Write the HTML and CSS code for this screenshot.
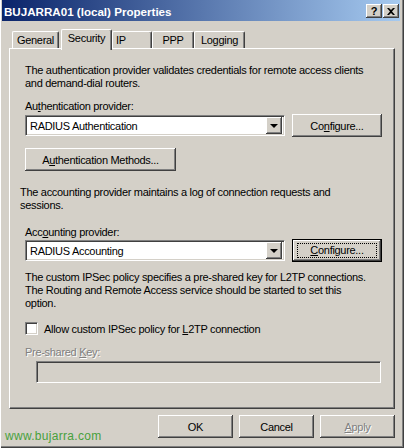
FILE: index.html
```html
<!DOCTYPE html>
<html lang="en">

<head>
    <meta charset="UTF-8">
    <title>BUJARRA01 (local) Properties</title>
    <link rel="stylesheet" href="styles.css">
</head>

<body>
    <div class="window">
        <div class="titlebar">
            <span class="title">BUJARRA01 (local) Properties</span>
            <div class="capBtns">
                <span class="capBtn help">?</span>
                <span class="capBtn">
                    <svg width="8" height="7" viewBox="0 0 8 7">
                        <path d="M0 0h2l2 2 2-2h2L5 3.5 8 7H6L4 5 2 7H0l3-3.5z" fill="#000" />
                    </svg>
                </span>
            </div>
        </div>

        <div class="dialog">
            <div class="tabs">
                <div class="tab tGeneral">General</div>
                <div class="tab active tSecurity">Security</div>
                <div class="tab tIp">IP</div>
                <div class="tab tPpp">PPP</div>
                <div class="tab tLog">Logging</div>
            </div>

            <div class="panel">
                <p class="desc first">The authentication provider validates credentials for remote access clients<br>and demand-dial routers.</p>

                <div class="lbl auth">Au<u>t</u>hentication provider:</div>
                <div class="row">
                    <div class="combo">
                        <span>RADIUS Authentication</span>
                        <span class="arrow"></span>
                    </div>
                    <button class="btn conf">Co<u>n</u>figure...</button>
                </div>

                <button class="btn methods">A<u>u</u>thentication Methods...</button>

                <p class="desc acct">The accounting provider maintains a log of connection requests and<br>sessions.</p>

                <div class="lbl acctLbl">Acc<u>o</u>unting provider:</div>
                <div class="row rowTight">
                    <div class="combo">
                        <span>RADIUS Accounting</span>
                        <span class="arrow"></span>
                    </div>
                    <button class="btn conf focused"><span class="focus"><u>C</u>onfigure...</span></button>
                </div>

                <p class="desc ipsec">The custom IPSec policy specifies a pre-shared key for L2TP connections.<br>The Routing and Remote Access service should be started to set this<br>option.</p>

                <label class="check">
                    <span class="box"></span>
                    <span>Allow custom IPSec policy for <u>L</u>2TP connection</span>
                </label>

                <div class="lbl disabled keyLbl">Pre-shared <u>K</u>ey:</div>
                <div class="keyField"></div>
            </div>

            <div class="footer">
                <button class="btn dlg">OK</button>
                <button class="btn dlg">Cancel</button>
                <button class="btn dlg disabled"><u>A</u>pply</button>
            </div>
        </div>

        <span class="watermark">www.bujarra.com</span>
    </div>
</body>

</html>
```

FILE: styles.css
```css
* {
    box-sizing: border-box;
}

body {
    margin: 0;
    background: #D4D0C8;
    font-family: "Liberation Sans", Arial, sans-serif;
    font-size: 11px;
    letter-spacing: -0.3px;
    color: #000;
}

.window {
    position: relative;
    width: 404px;
    height: 448px;
    padding: 0 4px 4px 2px;
    background: #D4D0C8;
    box-shadow: inset 1px 0 #fff, inset -1px -1px #404040, inset -2px -2px #808080;
}

.titlebar {
    height: 21px;
    display: flex;
    align-items: center;
    justify-content: space-between;
    padding: 0 1px 0 2px;
    background: linear-gradient(to right, #0A246A, #A6CAF0);
}

.title {
    color: #fff;
    font-weight: bold;
    font-size: 11.6px;
    letter-spacing: 0;
    padding-top: 2px;
}

.capBtns {
    display: flex;
    gap: 1px;
    padding-top: 1px;
}

.capBtn {
    width: 16px;
    height: 14px;
    display: flex;
    align-items: center;
    justify-content: center;
    background: #D4D0C8;
    box-shadow: inset -1px -1px #404040, inset 1px 1px #fff, inset -2px -2px #808080;
    font-weight: bold;
    font-size: 11px;
    line-height: 14px;
}

.dialog {
    padding: 8px 5px 0 7px;
}

/* tabs */
.tabs {
    display: flex;
    align-items: flex-end;
    height: 19px;
    padding-left: 3px;
    position: relative;
    z-index: 1;
}

.tab {
    height: 17px;
    line-height: 16px;
    text-align: center;
    background: #D4D0C8;
    border-top: 1px solid #fff;
    border-left: 1px solid #fff;
    border-right: 1px solid #404040;
    box-shadow: inset -1px 0 #808080;
    border-radius: 2px 2px 0 0;
}

.tab.active {
    height: 21px;
    line-height: 17px;
    margin-bottom: -2px;
    padding-bottom: 2px;
}

.tGeneral {
    width: 47px;
}

.tSecurity {
    width: 51px;
    margin-left: 2px;
}

.tIp {
    width: 40px;
    text-align: left;
    padding-left: 3px;
}

.tPpp {
    width: 42px;
}

.tLog {
    width: 51px;
}

/* tab page */
.panel {
    height: 361px;
    padding: 15px 10px 0 15px;
    border-top: 1px solid #fff;
    border-left: 1px solid #fff;
    border-right: 1px solid #404040;
    border-bottom: 1px solid #404040;
    box-shadow: inset -1px -1px #808080;
}

.desc {
    margin: 0;
    line-height: 13px;
    white-space: nowrap;
}

.lbl {
    line-height: 13px;
}

.auth {
    margin-top: 10px;
}

.row {
    display: flex;
    align-items: center;
    gap: 7px;
    margin-top: 1px;
}

.rowTight {
    margin-top: 0;
}

.combo {
    width: 260px;
    height: 21px;
    display: flex;
    align-items: center;
    justify-content: space-between;
    padding: 0 2px 0 4px;
    background: #fff;
    border-top: 1px solid #808080;
    border-left: 1px solid #808080;
    border-right: 1px solid #fff;
    border-bottom: 1px solid #fff;
    box-shadow: inset 1px 1px #404040, inset -1px -1px #D4D0C8;
}

.arrow {
    width: 16px;
    height: 17px;
    position: relative;
    background: #D4D0C8;
    box-shadow: inset -1px -1px #404040, inset 1px 1px #fff, inset -2px -2px #808080;
}

.arrow::after {
    content: "";
    position: absolute;
    left: 4px;
    top: 7px;
    border-left: 4px solid transparent;
    border-right: 4px solid transparent;
    border-top: 4px solid #000;
}

.btn {
    height: 23px;
    padding: 0;
    font-family: inherit;
    font-size: 11px;
    letter-spacing: inherit;
    color: #000;
    background: #D4D0C8;
    border: none;
    box-shadow: inset -1px -1px #404040, inset 1px 1px #fff, inset -2px -2px #808080;
}

.conf {
    width: 90px;
}

.conf.focused {
    box-shadow: inset 0 0 0 1px #000, inset -2px -2px #404040, inset 2px 2px #fff, inset -3px -3px #808080;
    display: flex;
    align-items: center;
    justify-content: center;
}

.focus {
    display: block;
    width: 80px;
    height: 15px;
    line-height: 13px;
    border: 1px dotted #000;
}

.methods {
    display: block;
    width: 151px;
    margin-top: 11px;
}

.acct {
    margin: 15px 0 0 -5px;
}

.acctLbl {
    margin-top: 14px;
}

.ipsec {
    margin-top: 9px;
}

.check {
    display: flex;
    align-items: center;
    gap: 6px;
    height: 13px;
    margin-top: 12px;
}

.box {
    width: 13px;
    height: 13px;
    background: #fff;
    border-top: 1px solid #808080;
    border-left: 1px solid #808080;
    border-right: 1px solid #fff;
    border-bottom: 1px solid #fff;
    box-shadow: inset 1px 1px #404040, inset -1px -1px #D4D0C8;
}

.disabled {
    color: #808080;
    text-shadow: 1px 1px #fff;
}

.keyLbl {
    margin-top: 11px;
}

.keyField {
    width: 345px;
    height: 22px;
    margin: 2px 0 0 11px;
    border-top: 1px solid #808080;
    border-left: 1px solid #808080;
    border-right: 1px solid #fff;
    border-bottom: 1px solid #fff;
    box-shadow: inset 1px 1px #404040, inset -1px -1px #D4D0C8;
}

/* bottom buttons */
.footer {
    display: flex;
    justify-content: flex-end;
    gap: 6px;
    margin-top: 6px;
}

.dlg {
    width: 75px;
}

.watermark {
    position: absolute;
    left: 5px;
    top: 429px;
    font-size: 12px;
    color: #48A03C;
    letter-spacing: 0.3px;
}
```
